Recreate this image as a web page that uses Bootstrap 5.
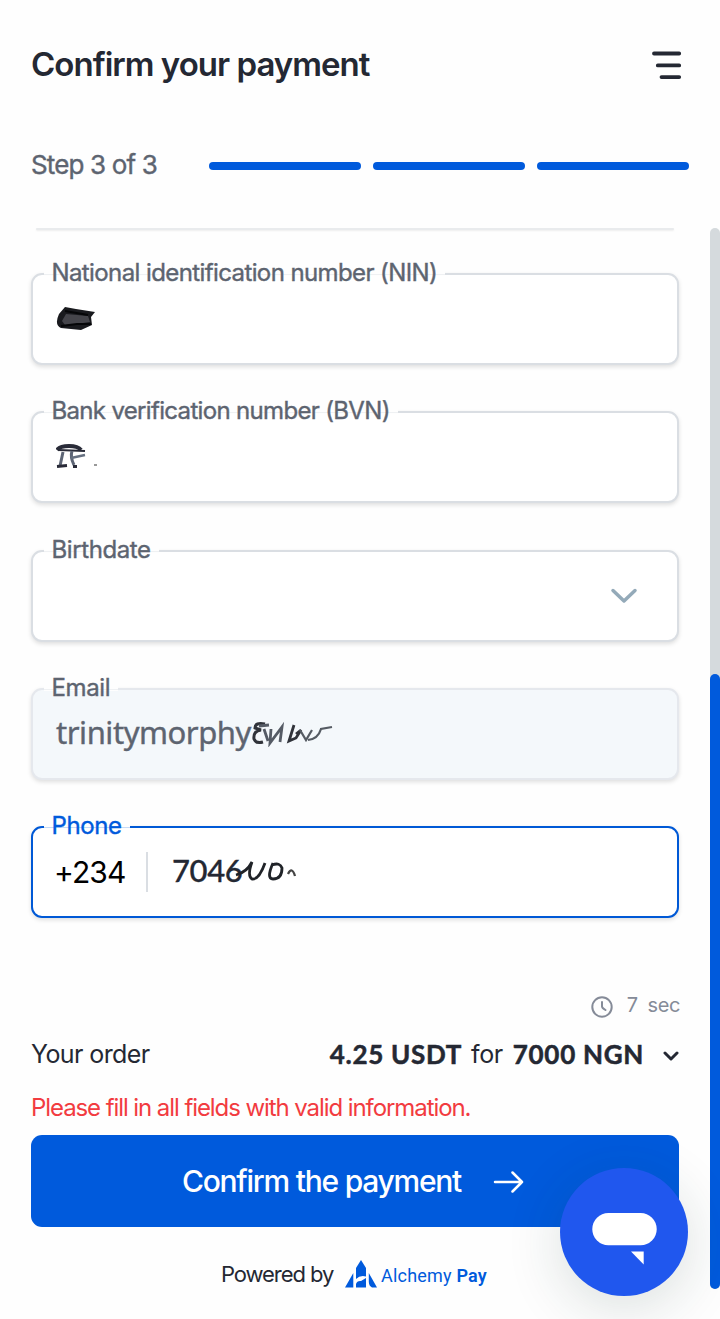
<!DOCTYPE html>
<html lang="en">
<head>
<meta charset="utf-8">
<meta name="viewport" content="width=device-width, initial-scale=1">
<title>Confirm your payment</title>
<link rel="stylesheet" href="https://cdn.jsdelivr.net/npm/bootstrap@5.3.0/dist/css/bootstrap.min.css">
<style>
body{font-family:Inter,"Liberation Sans",sans-serif;color:#242833;background:#fefefe;overflow:hidden;line-height:1;white-space:nowrap}
svg{display:block;flex:none}
.page{height:1319px}
.main-col{width:710px;padding-left:31px}
.top-head{height:130px;padding-right:28px}
.top-head h1{font-size:33px;font-weight:600;letter-spacing:-.98px;line-height:40px;margin:0 0 3px}
.steps{height:72px;padding-right:21px}
.steps .step-label{width:178px;font-size:26px;color:#5d6470;letter-spacing:-.85px;line-height:32px;margin-bottom:3px;-webkit-text-stroke:.4px}
.bar{height:8px;border-radius:4px;background:#005adc}
.fields{width:648px;margin-top:26px;height:762px}
.prev-edge{height:2px;margin:0 5px 43px;background:#e9ebed;box-shadow:0 1px 2px #00000012;border-radius:2px}
.field{height:92px;margin-bottom:46.3px;border:2px solid #dadee3;border-radius:11px;background:#fff;box-shadow:0 2px 4px #00000020;padding-left:23px}
.field .field-label{left:11px;top:-17px;padding:0 8px 0 7.5px;font-size:24px;line-height:30px;color:#5d6470;font-weight:400;letter-spacing:-.6px;-webkit-text-stroke:.4px;background:linear-gradient(#fefefe 0 16px,#eff1f3 16px 17px,#fefefe 17px 18px,transparent 18px)}
.field .field-label.label-short{letter-spacing:-.4px}
.field.filled{background:#f4f8fb;border-color:#e5e8ed}
.field.active{border-color:#0059d6}
.field.active .field-label{color:#005adc;background:linear-gradient(#fefefe 0 16px,#c5daf6 16px 17px,#fefefe 17px 18px,transparent 18px)}
.value-text{font-size:31px;line-height:40px}
.geo{font-family:"Noto Sans","Open Sans",sans-serif}
.timer{height:30px;font-size:20px;color:#858b98;letter-spacing:-.4px}
.order{height:40px;margin-top:14px;font-size:25px;letter-spacing:-.6px}
.order .amount{font-family:Lato,sans-serif;font-size:26px;font-weight:700;letter-spacing:.7px;-webkit-text-stroke:.5px;margin-bottom:1px}
.error-text{font-size:24px;line-height:30px;letter-spacing:-1.08px;color:#f23b40;margin-top:19px}
.btn-confirm{width:648px;height:92px;margin-top:12px;background:#005adc;color:#fff;border:0;border-radius:11px;font-size:30px;font-weight:500;letter-spacing:-1.25px}
.powered{width:648px;height:40px;margin-top:27px;font-size:22px}
.alchemy{font-family:Roboto,sans-serif;font-size:18px;color:#005adc;letter-spacing:.2px}
.scroll-rail{width:10px;height:1061px;margin-top:228px;background:#d5dadd;border-radius:5px;padding-top:446px}
.scroll-thumb{height:615px;background:#005adc;border-radius:5px}
.chat{width:128px;height:128px;left:560px;top:1168px;background:#2057ee;box-shadow:0 12px 56px #173b3328}
</style>
</head>
<body>
<div class="page d-flex position-relative">
<main class="main-col">
<header class="top-head d-flex align-items-center justify-content-between">
<h1>Confirm your payment</h1>
<svg width="30" height="30" viewBox="0 0 30 30" fill="none" stroke="#242833" stroke-width="3.8" stroke-linecap="round"><path d="M2 3.5H27.2M5.8 15.4H27.2M9.5 27.1H27.2"/></svg>
</header>
<section class="steps d-flex align-items-center">
<div class="step-label">Step 3 of 3</div>
<div class="d-flex flex-grow-1" style="gap:12px"><div class="bar flex-fill"></div><div class="bar flex-fill"></div><div class="bar flex-fill"></div></div>
</section>
<form class="fields">
<div class="prev-edge"></div>
<div class="field position-relative d-flex align-items-center">
<label class="field-label position-absolute">National identification number (NIN)</label>
<svg width="42" height="28" viewBox="0 0 42 28"><path d="M9 2 20 4 39 7 35 12 36 20 25 25 5 23Q-2 20 3 9Z" fill="#191a1e"/><path d="M10 9 32 11 34 17 20 19 9 20 6 16Z" fill="#45454b"/><path d="M5 21 21 19 35 19M9 6 32 10" stroke="#050608" stroke-width="2" fill="none"/></svg>
</div>
<div class="field position-relative d-flex align-items-center">
<label class="field-label position-absolute" style="letter-spacing:-.67px">Bank verification number (BVN)</label>
<svg width="44" height="28" viewBox="0 0 44 28" fill="none" stroke="#292b38"><path d="M1 7Q4 3 13 3 22 3 25 7" stroke-width="4"/><path d="M2 7 29 8" stroke-width="1.8"/><path d="M7 9 4 23M16 8Q14 14 18 22" stroke="#5d6575" stroke-width="3"/><path d="M15 15 29 12" stroke="#667080" stroke-width="2.4"/><path d="M1 23.5 11 22.5M17 23.5H21" stroke-width="2.8"/><path d="M38 22H41" stroke="#999" stroke-width="2"/></svg>
</div>
<div class="field position-relative d-flex align-items-center justify-content-end" style="padding-right:39px">
<label class="field-label label-short position-absolute">Birthdate</label>
<svg width="28" height="18" viewBox="0 0 28 18" fill="none" stroke="#94aab9" stroke-width="3.5" stroke-linecap="round" stroke-linejoin="round"><path d="M3 3.5 14 14 25 3.5"/></svg>
</div>
<div class="field filled position-relative d-flex align-items-center">
<label class="field-label label-short position-absolute">Email</label>
<span class="value-text geo" style="color:#5d6470;letter-spacing:-.45px;margin-bottom:4px;-webkit-text-stroke:.4px">trinitymorphy</span>
<svg width="84" height="26" viewBox="0 0 84 26" fill="none" stroke="#30333a" stroke-width="3"><path d="M14 3Q4 1 4 7L10 9Q2 10 3 18 5 23 12 21"/><path d="M8 5 18 4M13 8 17 20M20 8 19 22 31 6 29 21" stroke="#555b65" stroke-width="2.8"/><path d="M43 4 38 20 45 17 50 9 45 13" stroke-width="2.8"/><path d="M49 9 55 19 61 9M57 19Q67 18 70 8L81 6" stroke="#555b63" stroke-width="2.2"/></svg>
</div>
<div class="field active position-relative d-flex align-items-center">
<label class="field-label label-short position-absolute">Phone</label>
<span class="value-text text-black" style="width:92px;margin-left:-2px;margin-bottom:1px;font-size:30px;letter-spacing:-.9px">+234</span>
<span style="width:2px;height:40px;background:#dadee3;margin-right:24px"></span>
<span class="value-text" style="font-family:Lato,sans-serif;font-weight:500;letter-spacing:-.4px;margin-bottom:4px;-webkit-text-stroke:.3px">7046</span>
<svg width="66" height="26" viewBox="0 0 66 26" fill="none" stroke="#202328" stroke-width="2.8" style="margin-left:-7px;margin-bottom:3px"><path d="M1 17Q12 14 17 4 12 18 17 21 24 22 30 5" /><path d="M38 5Q31 21 38 21 47 21 47 10 45 4 37 7"/><path d="M53 16Q57 8 60 18" stroke="#444" stroke-width="2.3"/></svg>
</div>
</form>
<footer style="width:648px">
<div class="timer d-flex align-items-center justify-content-end">
<svg width="24" height="24" viewBox="0 0 24 24" fill="none" stroke="#858b98" stroke-width="2" stroke-linecap="round" style="margin-top:3px"><circle cx="12" cy="12" r="9.7"/><path d="M12 7V11.5Q12 13 15.5 15"/></svg>
<span style="margin-left:13px">7</span><span style="margin-left:10px;margin-right:-1px">sec</span>
</div>
<div class="order d-flex align-items-center">
<span class="me-auto">Your order</span><span class="amount">4.25 USDT</span><span style="margin:0 10px 0 9px;letter-spacing:-.4px">for</span><span class="amount">7000 NGN</span>
<svg width="18" height="14" viewBox="0 0 18 14" fill="none" stroke="#242833" stroke-width="3" stroke-linecap="round" stroke-linejoin="round" style="margin-left:17px;margin-top:3px"><path d="M4 4 10 10 16 4"/></svg>
</div>
<div class="error-text">Please fill in all fields with valid information.</div>
<button class="btn btn-confirm d-flex align-items-center justify-content-center" type="button"><span>Confirm the payment</span>
<svg width="32" height="26" viewBox="0 0 32 26" fill="none" stroke="#fff" stroke-width="2.5" stroke-linecap="round" stroke-linejoin="round" style="margin-left:32px;margin-top:2px;margin-right:3px"><path d="M2 13H29M19.5 3.5 29 13 19.5 22.5"/></svg></button>
<div class="powered d-flex align-items-center" style="padding-left:190px">
<span style="width:124px;margin-bottom:1px;letter-spacing:-1.08px">Powered by</span>
<svg width="32" height="28" viewBox="0 0 32 28" fill="#005adc"><path d="M11 8 16 0 21 8V16.5Q15 15 11 19ZM0 27.5 8.3 13V27.5ZM23.8 13 32 27.5H27Q24 26 23.8 22ZM11 27.5V24Q12 20.5 16 21L21 18V27.5Z"/></svg>
<span class="alchemy" style="margin-left:4px;margin-top:3px">Alchemy <span style="font-weight:600">Pay</span></span>
</div>
</footer>
</main>
<aside class="scroll-rail"><div class="scroll-thumb"></div></aside>
<div class="chat rounded-circle position-absolute"><svg width="128" height="128" viewBox="0 0 128 128" fill="#fff"><rect x="32.3" y="45" width="64.4" height="32.3" rx="16.1"/><path d="M71 83.5H83.7V96.5Z"/></svg></div>
</div>
<script src="https://cdn.jsdelivr.net/npm/bootstrap@5.3.0/dist/js/bootstrap.bundle.min.js"></script>
</body>
</html>
